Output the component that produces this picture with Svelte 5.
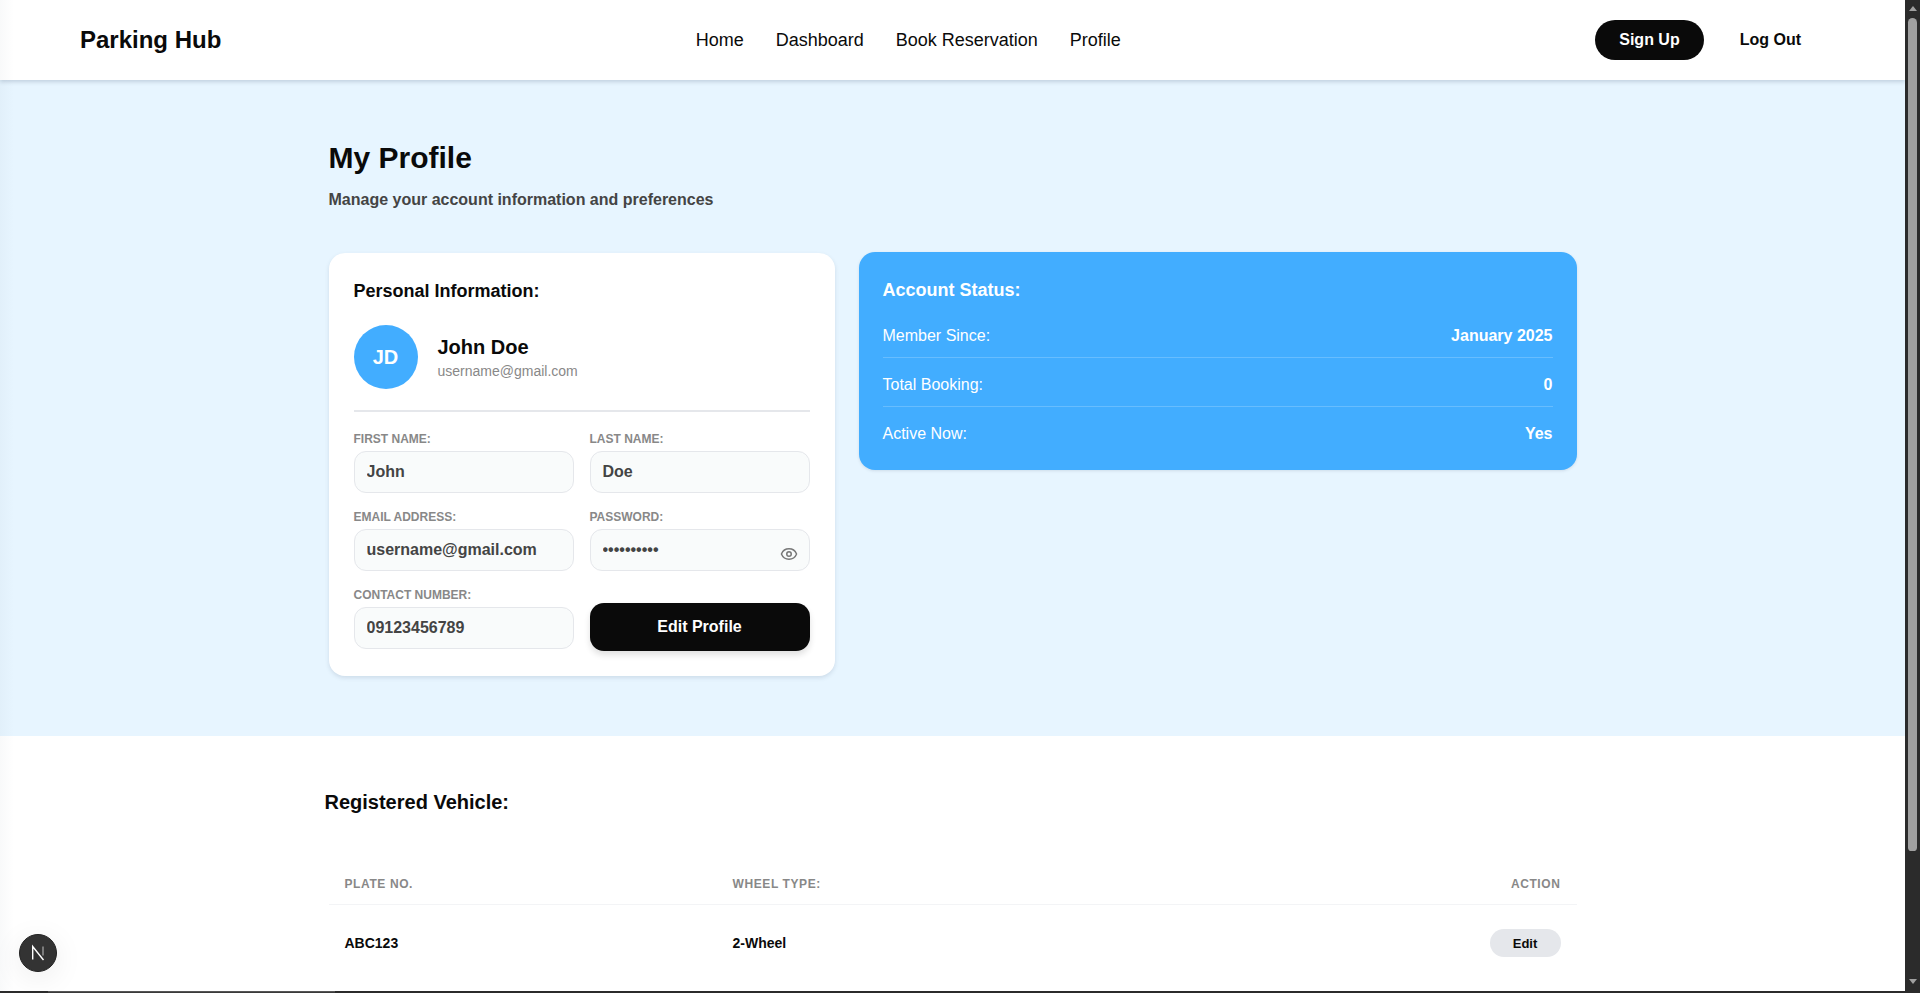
<script lang="ts">
  const navLinks = ["Home", "Dashboard", "Book Reservation", "Profile"];

  const statusRows = [
    { label: "Member Since:", value: "January 2025" },
    { label: "Total Booking:", value: "0" },
    { label: "Active Now:", value: "Yes" },
  ];

  const vehicles = [{ plate: "ABC123", wheels: "2-Wheel" }];
</script>

<div class="window">
  <div class="viewport">
    <div class="page">
      <header class="topbar">
        <div class="brand">Parking Hub</div>
        <nav class="nav">
          {#each navLinks as link}
            <a href="#top">{link}</a>
          {/each}
        </nav>
        <div class="auth">
          <button class="signup">Sign Up</button>
          <button class="logout">Log Out</button>
        </div>
      </header>

      <section class="band">
        <div class="wrap">
          <h1>My Profile</h1>
          <p class="subtitle">Manage your account information and preferences</p>

          <div class="cards">
            <div class="card personal">
              <h2>Personal Information:</h2>
              <div class="identity">
                <div class="avatar">JD</div>
                <div>
                  <div class="name">John Doe</div>
                  <div class="mail">username@gmail.com</div>
                </div>
              </div>

              <div class="form">
                <div class="field">
                  <span class="label">First Name:</span>
                  <input readonly value="John" />
                </div>
                <div class="field">
                  <span class="label">Last Name:</span>
                  <input readonly value="Doe" />
                </div>
                <div class="field">
                  <span class="label">Email Address:</span>
                  <input readonly value="username@gmail.com" />
                </div>
                <div class="field">
                  <span class="label">Password:</span>
                  <input readonly type="password" value="••••••••••" />
                  <svg class="eye" viewBox="0 0 24 24" fill="none" stroke="currentColor" stroke-width="2" stroke-linecap="round" stroke-linejoin="round">
                    <path d="M2.062 12.348a1 1 0 0 1 0-.696 10.75 10.75 0 0 1 19.876 0 1 1 0 0 1 0 .696 10.75 10.75 0 0 1-19.876 0" />
                    <circle cx="12" cy="12" r="3" />
                  </svg>
                </div>
                <div class="field">
                  <span class="label">Contact Number:</span>
                  <input readonly value="09123456789" />
                </div>
                <button class="edit-profile">Edit Profile</button>
              </div>
            </div>

            <div class="card status">
              <h2>Account Status:</h2>
              {#each statusRows as row}
                <div class="status-row">
                  <span>{row.label}</span>
                  <strong>{row.value}</strong>
                </div>
              {/each}
            </div>
          </div>
        </div>
      </section>

      <section class="vehicles">
        <div class="wrap">
          <h2 class="vehicles-title">Registered Vehicle:</h2>
          <div class="table-head">
            <span>Plate No.</span>
            <span>Wheel Type:</span>
            <span class="right">Action</span>
          </div>
          {#each vehicles as v}
            <div class="table-row">
              <span>{v.plate}</span>
              <span>{v.wheels}</span>
              <span class="right"><button class="edit">Edit</button></span>
            </div>
          {/each}
        </div>
      </section>
    </div>

    <div class="edge"></div>

    <div class="devtools">
      <svg viewBox="0 0 24 24" width="24" height="24" fill="none" stroke-width="1.4">
        <path d="M6.7 18.5V5.5L17.5 19" stroke="#fff" />
        <path d="M17 5.5v9" stroke="#9a9a9a" />
      </svg>
    </div>
  </div>

  <div class="scrollbar">
    <span class="arrow up"></span>
    <span class="thumb"></span>
    <span class="arrow down"></span>
  </div>
</div>
<div class="strip"><span></span></div>

<style>
  :global(html),
  :global(body) {
    margin: 0;
    height: 100%;
    overflow: hidden;
    background: #fff;
  }

  * {
    box-sizing: border-box;
  }

  .window {
    display: flex;
    height: 991px;
    font-family: "Liberation Sans", Arial, sans-serif;
    color: #0a0a0a;
  }

  .viewport {
    flex: 1;
    min-width: 0;
    overflow: hidden;
    position: relative;
  }

  .topbar {
    position: relative;
    z-index: 2;
    height: 80px;
    padding: 0 80px;
    display: flex;
    align-items: center;
    justify-content: space-between;
    background: #fff;
    box-shadow: 0 2px 4px rgba(60, 80, 110, 0.22);
  }

  .brand {
    font-size: 24px;
    font-weight: 700;
  }

  .nav {
    display: flex;
    gap: 32px;
  }

  .nav a {
    font-size: 18px;
    color: #0a0a0a;
    text-decoration: none;
  }

  .auth {
    display: flex;
    align-items: center;
    gap: 12px;
  }

  .auth button {
    height: 40px;
    padding: 0 24px;
    border: none;
    font: 700 16px "Liberation Sans", Arial, sans-serif;
  }

  .signup {
    background: #0a0a0a;
    color: #fff;
    border-radius: 20px;
  }

  .logout {
    background: transparent;
    color: #0a0a0a;
  }

  .band {
    background: #e7f5ff;
    height: 656px;
    padding-top: 60px;
  }

  .wrap {
    width: 1248px;
    margin: 0 auto;
  }

  h1 {
    margin: 0;
    font-size: 30px;
    line-height: 36px;
    font-weight: 700;
  }

  .subtitle {
    margin: 12px 0 0;
    font-size: 16px;
    line-height: 24px;
    font-weight: 700;
    color: #444;
  }

  .cards {
    margin-top: 41px;
    display: grid;
    grid-template-columns: 506px 718px;
    gap: 24px;
    align-items: start;
  }

  .card {
    border-radius: 16px;
  }

  .card h2 {
    margin: 0;
    font-size: 18px;
    line-height: 28px;
    font-weight: 700;
  }

  .personal {
    height: 423px;
    padding: 24px 25px;
    background: #fff;
    box-shadow: 0 2px 4px rgba(60, 80, 110, 0.15);
  }

  .identity {
    margin-top: 20px;
    padding-bottom: 21px;
    border-bottom: 2px solid #e5e7eb;
    display: flex;
    align-items: center;
    gap: 20px;
  }

  .avatar {
    width: 64px;
    height: 64px;
    border-radius: 50%;
    background: #42adff;
    color: #fff;
    font-size: 20px;
    font-weight: 700;
    display: flex;
    align-items: center;
    justify-content: center;
  }

  .name {
    font-size: 20px;
    line-height: 28px;
    font-weight: 700;
  }

  .mail {
    font-size: 14px;
    line-height: 20px;
    color: #888;
  }

  .form {
    margin-top: 19px;
    display: grid;
    grid-template-columns: 220px 220px;
    column-gap: 16px;
    row-gap: 16px;
  }

  .field {
    position: relative;
    display: flex;
    flex-direction: column;
  }

  .label {
    font-size: 12px;
    line-height: 16px;
    font-weight: 700;
    text-transform: uppercase;
    color: #888;
    margin-bottom: 4px;
  }

  input {
    width: 100%;
    height: 42px;
    padding: 0 12px;
    border: 1px solid #e5e7eb;
    border-radius: 12px;
    background: #f9fbfb;
    font: 700 16px "Liberation Sans", Arial, sans-serif;
    color: #444;
    outline: none;
  }

  .eye {
    position: absolute;
    right: 12px;
    bottom: 8px;
    width: 18px;
    height: 18px;
    color: #777;
  }

  .edit-profile {
    align-self: end;
    height: 48px;
    margin-bottom: -2px;
    border: none;
    border-radius: 14px;
    background: #0a0a0a;
    color: #fff;
    font: 700 16px "Liberation Sans", Arial, sans-serif;
    box-shadow: 0 4px 6px rgba(0, 0, 0, 0.12);
  }

  .status {
    height: 218px;
    margin-top: -1px;
    padding: 24px;
    background: #42adff;
    color: #fff;
    box-shadow: 0 1px 3px rgba(60, 80, 110, 0.15);
  }

  .status h2 {
    margin-bottom: 20px;
  }

  .status-row {
    display: flex;
    justify-content: space-between;
    font-size: 16px;
    line-height: 24px;
    padding-bottom: 9px;
    margin-top: 15px;
    border-bottom: 1px solid rgba(255, 255, 255, 0.2);
  }

  .status-row:last-child {
    border-bottom: none;
  }

  .vehicles {
    background: #fff;
    height: 255px;
  }

  .vehicles-title {
    margin: 52px 0 0 -4px;
    font-size: 20px;
    line-height: 28px;
    font-weight: 700;
  }

  .table-head,
  .table-row {
    display: grid;
    grid-template-columns: 388px 1fr 200px;
    padding: 0 16px;
  }

  .table-head {
    margin-top: 46px;
    height: 43px;
    padding-top: 2px;
    align-items: center;
    border-bottom: 1px solid #f3f4f6;
    font-size: 12px;
    font-weight: 700;
    letter-spacing: 0.6px;
    text-transform: uppercase;
    color: #888;
  }

  .table-row {
    height: 76px;
    align-items: center;
    font-size: 14px;
    font-weight: 700;
  }

  .right {
    text-align: right;
  }

  .edit {
    height: 28px;
    width: 71px;
    border: none;
    border-radius: 14px;
    background: #e5e7eb;
    color: #0a0a0a;
    font: 700 13px "Liberation Sans", Arial, sans-serif;
    vertical-align: middle;
  }

  .edge {
    position: absolute;
    inset: 0 auto 0 0;
    z-index: 3;
    width: 14px;
    pointer-events: none;
    background: linear-gradient(to right, rgba(90, 110, 130, 0.04), rgba(90, 110, 130, 0));
  }

  .devtools {
    position: absolute;
    z-index: 4;
    left: 19px;
    top: 934px;
    width: 38px;
    height: 38px;
    border-radius: 50%;
    background: #333;
    border: 1px solid #222;
    display: flex;
    align-items: center;
    justify-content: center;
    box-shadow: 0 6px 30px rgba(0, 0, 0, 0.08);
  }

  .scrollbar {
    width: 15px;
    flex: none;
    background: #2b2b2b;
    position: relative;
    display: flex;
    flex-direction: column;
    align-items: center;
  }

  .arrow {
    width: 0;
    height: 0;
    border-left: 4.5px solid transparent;
    border-right: 4.5px solid transparent;
  }

  .arrow.up {
    margin-top: 6px;
    border-bottom: 5px solid #a0a0a0;
  }

  .arrow.down {
    position: absolute;
    top: 979px;
    border-top: 5px solid #a0a0a0;
  }

  .thumb {
    width: 9px;
    height: 833px;
    margin-top: 7px;
    border-radius: 5px 5px 4px 4px;
    background: #a0a0a0;
  }

  .strip {
    height: 2px;
    background: #2b2b2b;
  }

  .strip span {
    display: block;
    width: 287px;
    height: 2px;
    margin-left: 48px;
    background: #3a3a3a;
    border-top: 1px solid #555;
  }
</style>
